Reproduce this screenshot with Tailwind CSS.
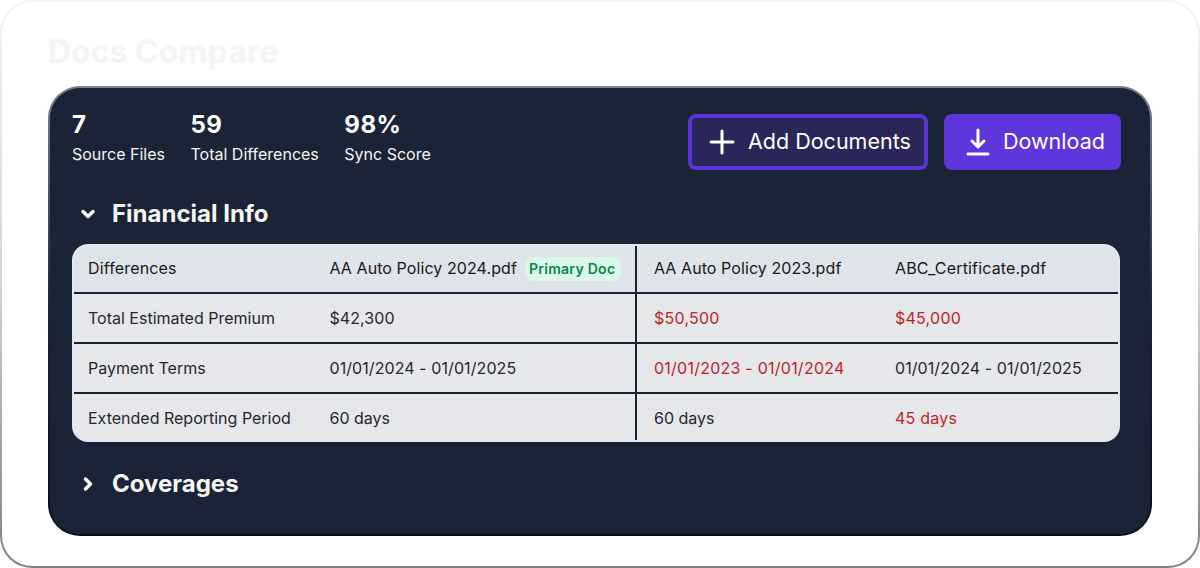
<!DOCTYPE html>
<html lang="en">
<head>
    <meta charset="UTF-8">
    <title>Docs Compare</title>
    <script src="https://cdn.jsdelivr.net/npm/@tailwindcss/browser@4"></script>
</head>
<body class="bg-white font-['Inter',sans-serif]">
    <!-- Outer frame: gradient border -->
    <div class="h-[568px] w-[1200px] rounded-[32px] bg-gradient-to-b from-[#f1f5f9] via-[#d4d4d8] to-[#808080] p-[2px]">
        <div class="h-full rounded-[30px] bg-white px-[46px] pt-[31px]">
            <h1 class="h-[38px] text-[32px] leading-[38px] font-bold text-[#f5f5f4]">Docs Compare</h1>
            <div class="mt-[15px] h-[450px] w-[1104px] rounded-[32px] bg-gradient-to-b from-[#7c8596] via-[#1b2437] to-[#0b0f1a] p-[2px]">
                <div class="h-full rounded-[30px] bg-[#1b2437] pr-[29px] pl-[22px] pt-[23px]">
                    <!-- Stats and actions -->
                    <div class="flex items-start justify-between">
                        <div class="flex gap-[25.5px] text-white">
                            <div>
                                <div class="text-2xl leading-[28px] font-bold tracking-[0.02em]">7</div>
                                <div class="mt-[3px] text-base leading-[24px] text-[#f5f5f4]">Source Files</div>
                            </div>
                            <div>
                                <div class="text-2xl leading-[28px] font-bold tracking-[0.02em]">59</div>
                                <div class="mt-[3px] text-base leading-[24px] text-[#f5f5f4]">Total Differences</div>
                            </div>
                            <div>
                                <div class="text-2xl leading-[28px] font-bold tracking-[0.02em]">98%</div>
                                <div class="mt-[3px] text-base leading-[24px] text-[#f5f5f4]">Sync Score</div>
                            </div>
                        </div>
                        <div class="mt-[3px] flex gap-4">
                            <button class="flex h-[56px] w-[240px] items-center gap-[12px] rounded-lg border-4 border-[#5b34d9] bg-[#2a2659] pl-[16px] text-[21.5px] font-normal text-white">
                                <svg class="h-7 w-7" fill="none" stroke="currentColor" stroke-width="3" stroke-linecap="round" viewBox="0 0 28 28"><path d="M14 3v22M3 14h22"/></svg>
                                <span class="mb-[2px]">Add Documents</span>
                            </button>
                            <button class="flex h-[56px] w-[177px] items-center gap-[11px] rounded-lg bg-[#5f35dc] pl-[20px] text-[21.5px] font-normal text-white">
                                <svg class="h-7 w-7" fill="none" stroke="currentColor" stroke-width="3" stroke-linecap="round" stroke-linejoin="round" viewBox="0 0 28 28"><path d="M14 2v17M8 13l6 6 6-6M4 26h20"/></svg>
                                <span class="mb-[2px]">Download</span>
                            </button>
                        </div>
                    </div>

                    <!-- Financial Info -->
                    <div class="mt-[28px] flex h-[32px] items-center">
                        <svg class="ml-[8px] h-4 w-4 text-white" fill="none" stroke="currentColor" stroke-width="3.5" stroke-linecap="round" stroke-linejoin="round" viewBox="0 0 16 16"><path d="M3 5.5l5 5 5-5"/></svg>
                        <h2 class="ml-[16px] text-2xl font-bold text-[#f5f5f4]">Financial Info</h2>
                    </div>

                    <div class="mt-[14px] w-[1048px] overflow-hidden rounded-2xl border-2 border-[#e2e8f0] bg-[#e6e7ea] text-base text-[#27272a]">
                        <div class="flex h-[46px] items-center bg-[#dfe3ea] tracking-[0.005em] text-[#18181b]">
                            <div class="w-[240px] pb-[2px] pl-[14px] tracking-[0.01em]">Differences</div>
                            <div class="flex h-full w-[323px] items-center gap-[8px] border-r-2 border-[#1b2437] pb-[2px] pl-[15.5px]">
                                AA Auto Policy 2024.pdf
                                <span class="mt-[2px] rounded-lg bg-[#dcf7ea] py-[2px] pr-[6px] pl-[4px] text-sm leading-[20px] font-semibold tracking-[0.02em] text-[#008a50]">Primary Doc</span>
                            </div>
                            <div class="w-[241px] pb-[2px] pl-[17px]">AA Auto Policy 2023.pdf</div>
                            <div class="pb-[2px] pl-[17px] tracking-[0.01em]">ABC_Certificate.pdf</div>
                        </div>
                        <div class="flex h-[50px] items-center border-t-2 border-[#1b2437]">
                            <div class="w-[240px] pl-[14px]">Total Estimated Premium</div>
                            <div class="flex h-full w-[323px] items-center border-r-2 border-[#1b2437] pl-[15.5px] tracking-[0.005em]">$42,300</div>
                            <div class="w-[241px] pl-[17px] tracking-[0.015em] text-[#c01f1f]">$50,500</div>
                            <div class="pl-[17px] tracking-[0.015em] text-[#c01f1f]">$45,000</div>
                        </div>
                        <div class="flex h-[50px] items-center border-t-2 border-[#1b2437]">
                            <div class="w-[240px] pl-[14px]">Payment Terms</div>
                            <div class="flex h-full w-[323px] items-center border-r-2 border-[#1b2437] pl-[15.5px] tracking-[0.005em]">01/01/2024 - 01/01/2025</div>
                            <div class="w-[241px] pl-[17px] tracking-[0.015em] text-[#c01f1f]">01/01/2023 - 01/01/2024</div>
                            <div class="pl-[17px] tracking-[0.005em]">01/01/2024 - 01/01/2025</div>
                        </div>
                        <div class="flex h-[48px] items-center border-t-2 border-[#1b2437]">
                            <div class="w-[240px] pt-[2px] pl-[14px]">Extended Reporting Period</div>
                            <div class="flex h-full w-[323px] items-center border-r-2 border-[#1b2437] pt-[2px] pl-[15.5px]">60 days</div>
                            <div class="w-[241px] pt-[2px] pl-[17px]">60 days</div>
                            <div class="pt-[2px] pl-[17px] tracking-[0.015em] text-[#c01f1f]">45 days</div>
                        </div>
                    </div>

                    <!-- Coverages -->
                    <div class="mt-[26px] flex h-[32px] items-center">
                        <svg class="ml-[8px] h-4 w-4 text-white" fill="none" stroke="currentColor" stroke-width="3.5" stroke-linecap="round" stroke-linejoin="round" viewBox="0 0 16 16"><path d="M5.5 3l5 5-5 5"/></svg>
                        <h2 class="ml-[16px] text-2xl font-bold text-[#f5f5f4]">Coverages</h2>
                    </div>
                </div>
            </div>
        </div>
    </div>
</body>
</html>
